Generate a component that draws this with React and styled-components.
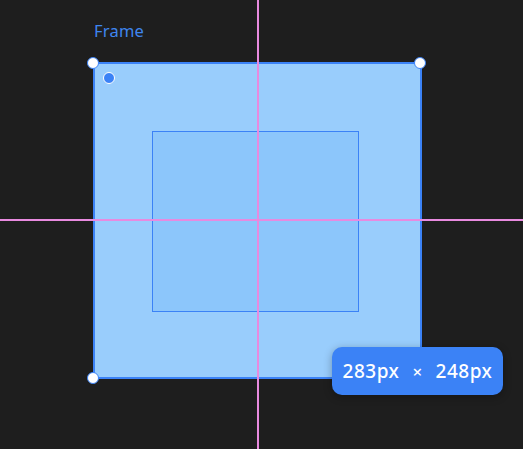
import styled, { createGlobalStyle } from "styled-components";

const GlobalStyle = createGlobalStyle`
  html, body {
    margin: 0;
    padding: 0;
    background: #1e1e1e;
  }
  body {
    font-family: "Noto Sans", "Open Sans", sans-serif;
  }
`;

const corners = [
  { x: 93, y: 63 },
  { x: 420, y: 63 },
  { x: 93, y: 378 },
];

const App = () => {
  return (
    <>
      <GlobalStyle />
      <Canvas>
        <Label>Frame</Label>
        <Frame>
          <Anchor />
          <Child />
        </Frame>
        <GuideV />
        <GuideH />
        {corners.map((c, i) => (
          <Handle key={i} style={{ left: c.x, top: c.y }} />
        ))}
        <SizeBadge>
          <span>283px</span>
          <Times>×</Times>
          <span>248px</span>
        </SizeBadge>
      </Canvas>
    </>
  );
};

export default App;

const Canvas = styled.div`
  position: relative;
  width: 523px;
  height: 449px;
  overflow: hidden;
  background: #1e1e1e;
`;

const Label = styled.div`
  position: absolute;
  left: 94px;
  top: 19px;
  font-size: 16.5px;
  color: #3f86f0;
  letter-spacing: 0.2px;
`;

const Frame = styled.div`
  position: absolute;
  left: 93px;
  top: 62px;
  width: 329px;
  height: 317px;
  box-sizing: border-box;
  border: 2px solid #3b82f6;
  border-radius: 3px;
  background: #99cdfc;
`;

const Anchor = styled.div`
  position: absolute;
  left: 8px;
  top: 8px;
  width: 10px;
  height: 10px;
  border-radius: 50%;
  background: #3b82f6;
  border: 1.5px solid #ffffff;
`;

const Child = styled.div`
  position: absolute;
  left: 57px;
  top: 67px;
  width: 207px;
  height: 181px;
  box-sizing: border-box;
  border: 1px solid #3b82f6;
  background: #8cc6fb;
`;

const GuideV = styled.div`
  position: absolute;
  left: 257px;
  top: 0;
  width: 2px;
  height: 100%;
  background: #e88adf;
`;

const GuideH = styled.div`
  position: absolute;
  left: 0;
  top: 219px;
  width: 100%;
  height: 2px;
  background: #e88adf;
`;

const Handle = styled.div`
  position: absolute;
  width: 10px;
  height: 10px;
  margin: -6.5px 0 0 -6.5px;
  border-radius: 50%;
  background: #ffffff;
  border: 1.5px solid #3b82f6;
`;

const SizeBadge = styled.div`
  position: absolute;
  left: 332px;
  top: 347px;
  width: 171px;
  height: 48px;
  box-sizing: border-box;
  border-radius: 10px;
  background: #3b82f6;
  box-shadow: 0 2px 8px rgba(0, 0, 0, 0.3);
  display: flex;
  align-items: center;
  justify-content: center;
  gap: 13px;
  color: #ffffff;
  font-size: 19px;
  font-weight: 500;
  letter-spacing: 0.5px;
`;

const Times = styled.span`
  font-size: 17px;
`;
